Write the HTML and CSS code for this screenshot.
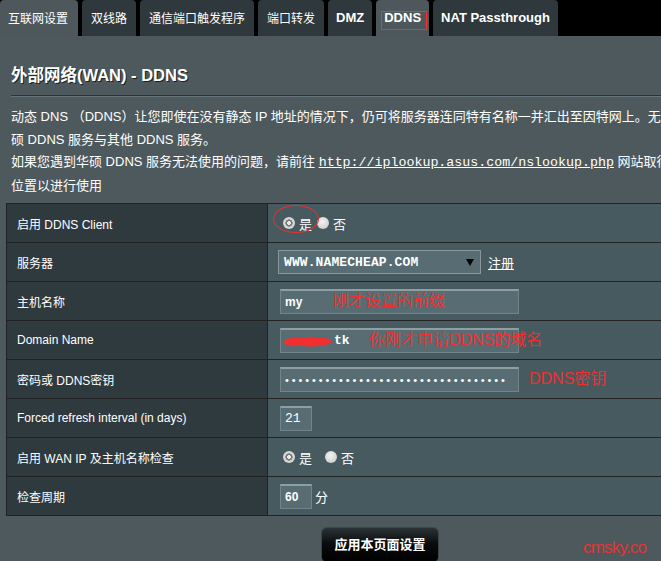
FILE: index.html
```html
<!DOCTYPE html>
<html lang="zh-CN">
<head>
<meta charset="utf-8">
<title>外部网络(WAN) - DDNS</title>
<link rel="stylesheet" href="styles.css">
</head>
<body>
<div class="page">
  <div class="tabs">
    <div class="tab tab-active">互联网设置</div>
    <div class="tab">双线路</div>
    <div class="tab">通信端口触发程序</div>
    <div class="tab">端口转发</div>
    <div class="tab tab-latin">DMZ</div>
    <div class="tab tab-latin tab-current"><span class="mark-box"></span>DDNS</div>
    <div class="tab tab-latin">NAT Passthrough</div>
  </div>

  <div class="main">
    <h1 class="title">外部网络(WAN) - DDNS</h1>
    <div class="sep"></div>
    <p class="desc">动态 DNS （DDNS）让您即使在没有静态 IP 地址的情况下，仍可将服务器连同特有名称一并汇出至因特网上。无线路由器内置华硕 DDNS 服务与其他 DDNS 服务。<br>如果您遇到华硕 DDNS 服务无法使用的问题，请前往 <a class="mono-link" href="#">http://iplookup.asus.com/nslookup.php</a> 网站取得您的 IP 地址的位置以进行使用</p>

    <table class="form">
      <tr>
        <th>启用 DDNS Client</th>
        <td>
          <div class="cell">
            <span class="radio-wrap">
              <span class="radio radio-on"></span><span class="rlabel">是</span>
              <span class="ring"></span>
            </span>
            <span class="radio"></span><span class="rlabel">否</span>
          </div>
        </td>
      </tr>
      <tr>
        <th>服务器</th>
        <td>
          <div class="cell">
            <div class="select"><span class="select-text">WWW.NAMECHEAP.COM</span><span class="arrow"></span></div>
            <a class="reg" href="#">注册</a>
          </div>
        </td>
      </tr>
      <tr>
        <th>主机名称</th>
        <td>
          <div class="cell">
            <div class="field field-wide"><span class="val-bold">my</span></div>
            <span class="note note-host">刚才设置的前缀</span>
          </div>
        </td>
      </tr>
      <tr>
        <th>Domain Name</th>
        <td>
          <div class="cell">
            <div class="field field-wide">
              <svg class="scribble" width="52" height="14" viewBox="0 0 52 14"><path d="M4 8 C10 4, 18 6, 26 5 C34 4, 42 6, 48 7 C42 10, 30 11, 20 10 C12 10, 6 11, 4 8 Z" fill="#f03030" stroke="#f03030" stroke-width="4" stroke-linejoin="round"/></svg>
              <span class="val-mono">tk</span>
            </div>
            <span class="note note-domain">你刚才申请DDNS的域名</span>
          </div>
        </td>
      </tr>
      <tr>
        <th>密码或 DDNS密钥</th>
        <td>
          <div class="cell">
            <div class="field field-wide"><span class="dots">•••••••••••••••••••••••••••••••••</span></div>
            <span class="note note-key">DDNS密钥</span>
          </div>
        </td>
      </tr>
      <tr>
        <th>Forced refresh interval (in days)</th>
        <td>
          <div class="cell">
            <div class="field field-small"><span class="val-mono val-plain">21</span></div>
          </div>
        </td>
      </tr>
      <tr>
        <th>启用 WAN IP 及主机名称检查</th>
        <td>
          <div class="cell">
            <span class="radio radio-on"></span><span class="rlabel rlabel-gap">是</span>
            <span class="radio"></span><span class="rlabel">否</span>
          </div>
        </td>
      </tr>
      <tr>
        <th>检查周期</th>
        <td>
          <div class="cell">
            <div class="field field-small"><span class="val-bold">60</span></div>
            <span class="unit">分</span>
          </div>
        </td>
      </tr>
    </table>

    <div class="actions">
      <button class="apply" type="button">应用本页面设置</button>
    </div>
  </div>
  <span class="watermark">cmsky.co</span>
</div>
</body>
</html>
```

FILE: styles.css
```css
* { box-sizing: border-box; }

html, body {
  margin: 0;
  padding: 0;
  background: #4d595d;
  overflow: hidden;
}

body {
  font-family: "Liberation Sans", Arial, "Noto Sans CJK SC", sans-serif;
  color: #fff;
}

.page {
  position: relative;
  width: 760px;
  height: 561px;
  overflow: hidden;
}

/* Tabs */
.tabs {
  display: flex;
  gap: 4px;
  height: 36px;
  background: #000;
}

.tab {
  position: relative;
  display: flex;
  align-items: center;
  height: 36px;
  padding: 0 9px 2px 9px;
  background: #2f383c;
  border-radius: 4px 4px 0 0;
  font-size: 12px;
  color: #fff;
  white-space: nowrap;
}

.tab:first-child { padding-left: 8px; padding-right: 10px; }

.tab-latin {
  font-size: 13px;
  font-weight: bold;
  padding: 0 8px 2px 8px;
}

.tab-active,
.tab-current {
  background: #4e585c;
}

.mark-box {
  position: absolute;
  z-index: 2;
  left: 5px;
  top: 11px;
  width: 46px;
  height: 19px;
  border: 1px solid #ff2d2d;
}

/* Main */
.main {
  padding-top: 28px;
}

.title {
  margin: 0 0 0 11px;
  font-size: 16.5px;
  font-weight: bold;
  line-height: 22px;
  text-shadow: 1px 1px 0 #1a1f21;
}

.sep {
  margin: 9px 0 0 11px;
  height: 2px;
  border-top: 1px solid #2b3438;
  border-bottom: 1px solid #66737a;
}

.desc {
  margin: 9px 0 0 11px;
  font-size: 13px;
  line-height: 22.5px;
  color: #fff;
}

.mono-link {
  font-family: "Liberation Mono", "Courier New", monospace;
  font-size: 13.3px;
  color: #fff;
  text-decoration: underline;
}

/* Form table */
.form {
  margin: 6px 0 0 6px;
  width: 748px;
  border-collapse: collapse;
  border: 1px solid #222;
}

.form th,
.form td {
  height: 39px;
  border: 1px solid #222;
  padding: 0;
}

.form th {
  width: 261px;
  padding-left: 10px;
  background: #2f3a3e;
  font-size: 12px;
  font-weight: normal;
  text-align: left;
}

.form td {
  background: #475a5f;
  padding-left: 10px;
  font-size: 12px;
}

.cell {
  position: relative;
  display: flex;
  align-items: center;
}

/* radios */
.radio-wrap {
  position: relative;
  display: inline-flex;
  align-items: center;
}

.radio {
  display: inline-block;
  width: 12px;
  height: 12px;
  margin-left: 5px;
  border-radius: 50%;
  background: radial-gradient(circle at 45% 40%, #f4f4f4 0, #d6d6d6 60%, #b8b8b8 100%);
}

.radio-on {
  background: radial-gradient(circle, #e8e8e8 0 1.6px, #7a7a7a 2.2px 3.4px, #dcdcdc 3.9px, #c4c4c4 100%);
}

.rlabel {
  margin-left: 4px;
  font-size: 13px;
}

.rlabel-gap { margin-right: 8px; }

.ring {
  position: absolute;
  left: -5px;
  top: -9px;
  width: 46px;
  height: 28px;
  border: 1px solid #e03434;
  border-radius: 50%;
}

/* select */
.select {
  display: flex;
  align-items: center;
  justify-content: space-between;
  width: 203px;
  height: 24px;
  padding: 0 6px 0 5px;
  background: #576d73;
  border: 1px solid #8a9699;
}

.select-text {
  font-family: "Liberation Mono", "Courier New", monospace;
  font-size: 13px;
  font-weight: bold;
  letter-spacing: 0.1px;
}

.arrow {
  width: 0;
  height: 0;
  border-left: 4px solid transparent;
  border-right: 4px solid transparent;
  border-top: 7px solid #000;
}

.reg {
  margin-left: 7px;
  color: #fff;
  font-size: 13px;
  text-decoration: underline;
}

/* inputs */
.field {
  display: flex;
  align-items: center;
  height: 25px;
  padding-left: 4px;
  background: #576d73;
  border: 1px solid #72858a;
  border-top: 2px solid #8f9ea2;
  margin-left: 2px;
}

.field-wide { width: 239px; }
.field-small { width: 32px; }

.val-bold {
  font-size: 12px;
  font-weight: bold;
}

.val-mono {
  font-family: "Liberation Mono", "Courier New", monospace;
  font-size: 13px;
  font-weight: bold;
}

.val-plain { font-weight: normal; }

.scribble {
  margin-left: -3px;
  margin-right: 0;
}

.dots {
  font-size: 11px;
  letter-spacing: 2.9px;
  line-height: 10px;
  white-space: nowrap;
}

.unit {
  margin-left: 3px;
  font-size: 13px;
}

/* annotations */
.note {
  position: absolute;
  top: 50%;
  transform: translateY(-50%);
  color: #ee3030;
  font-size: 16px;
  line-height: 18px;
  white-space: nowrap;
}

.note-host { left: 55px; }
.note-domain { left: 91px; }
.note-key { left: 251px; }

/* action */
.actions {
  display: flex;
  justify-content: center;
  margin-top: 11px;
}

.apply {
  width: 118px;
  height: 36px;
  border: 1px solid #3e4649;
  border-radius: 6px;
  background: linear-gradient(#2c3437 0%, #0a0c0d 45%, #000 100%);
  color: #fff;
  font-family: "Noto Sans CJK SC", sans-serif;
  font-size: 13px;
  font-weight: bold;
  padding: 0 0 4px;
}

.watermark {
  position: absolute;
  left: 583px;
  top: 538px;
  color: #e43434;
  font-size: 17px;
  letter-spacing: -0.8px;
  font-family: "Liberation Sans", Arial, sans-serif;
}
```
